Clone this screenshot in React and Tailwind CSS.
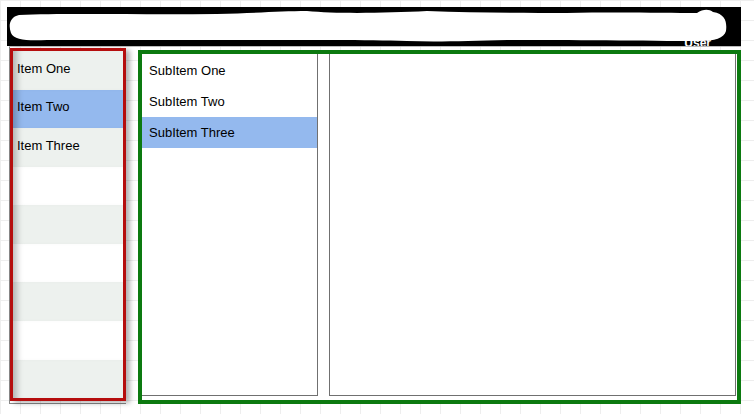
import React from 'react';

const ITEMS = ['Item One', 'Item Two', 'Item Three', '', '', '', '', '', ''];
const SUB_ITEMS = ['SubItem One', 'SubItem Two', 'SubItem Three'];

function Header() {
  return (
    <div className="relative h-[39px] w-full bg-black overflow-hidden">
      <div className="absolute right-[30px] top-[30px] text-[12px] font-bold text-white leading-none">
        User
      </div>
      {/* redaction scribble */}
      <svg className="absolute left-0 top-0" width="734" height="39" viewBox="0 0 734 39">
        <path
          d="M12 8 C60 6 140 8 210 7 C250 6 275 4 300 4 C330 7 380 6 420 4 C470 6 520 6 560 6 C610 5 660 6 690 6 C696 2 702 2 706 5 C719 7 720 16 719 24 C717 31 708 34 692 34 C640 34 560 33 500 33 C460 34 430 35 400 34 C360 33 300 33 250 33 C180 33 100 33 40 33 C20 34 7 33 4 26 C1 18 3 10 12 8 Z"
          fill="white"
        />
      </svg>
    </div>
  );
}

function MainList() {
  return (
    <div className="w-[116px] h-[353px] mt-[1px] border-[3px] border-[#b50d0d] shadow-[4px_2px_5px_rgba(0,0,0,0.3)] flex flex-col bg-white">
      {ITEMS.map((label, i) => (
        <div
          key={i}
          className={`flex-1 flex items-center pl-[4px] pb-[4px] text-[13px] text-black shadow-[inset_9px_0_6px_-5px_rgba(0,0,0,0.25)] ${
            i === 1 ? 'bg-[#94b9ee]' : i % 2 === 0 ? 'bg-[#edf1ee]' : 'bg-white'
          }`}
        >
          {label}
        </div>
      ))}
    </div>
  );
}

function Detail() {
  return (
    <div className="w-[603px] h-[354px] mt-[3px] ml-[12px] border-[4px] border-[#0c7a10] bg-white flex pb-[4px] pr-[1px] gap-[11px]">
      <div className="w-[176px] h-full border-r border-b border-[#707070] pt-[1px] flex flex-col">
        {SUB_ITEMS.map((label, i) => (
          <div
            key={label}
            className={`h-[31px] flex items-center pl-[7px] text-[13px] text-black ${
              i === 2 ? 'bg-[#94b9ee]' : ''
            }`}
          >
            {label}
          </div>
        ))}
      </div>
      <div className="flex-1 h-full border-l border-r border-b border-[#707070]" />
    </div>
  );
}

export default function App() {
  return (
    <div
      className="w-[754px] h-[414px] overflow-hidden bg-white bg-[image:linear-gradient(#eeeeee_1px,transparent_1px),linear-gradient(90deg,#eeeeee_1px,transparent_1px)] bg-[length:20px_20px] pt-[7px] pl-[7px]"
      style={{ fontFamily: '"Liberation Sans", Arial, sans-serif' }}
    >
      <div className="w-[734px] flex flex-col">
        <Header />
        <div className="flex ml-[2px] h-[357px] border-t border-[#bbbbbb]">
          <div className="h-[357px] border-l border-b border-[#888888] pl-0 flex">
            <MainList />
          </div>
          <Detail />
        </div>
      </div>
    </div>
  );
}
